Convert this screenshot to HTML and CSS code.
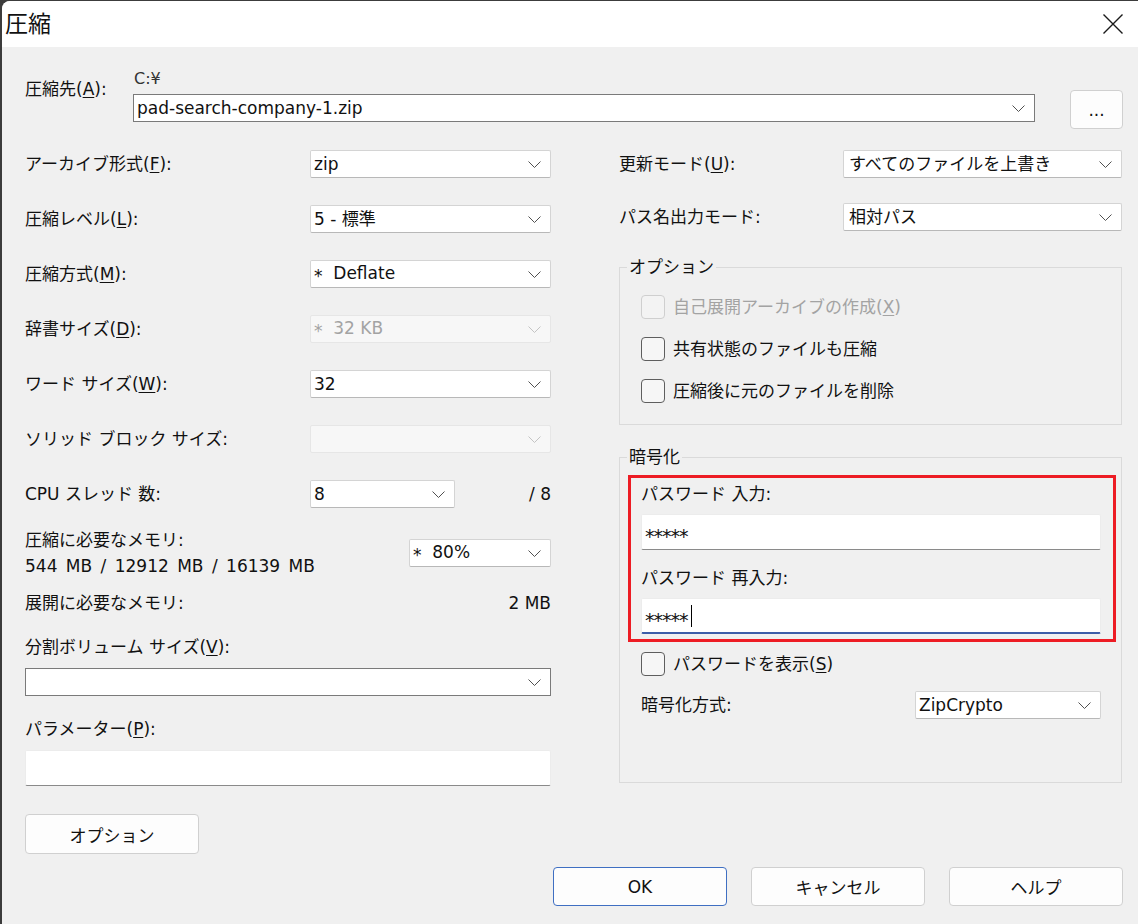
FILE: index.html
```html
<!DOCTYPE html>
<html lang="ja">
<head>
  <meta charset="UTF-8">
  <title>圧縮</title>
  <link rel="stylesheet" href="styles.css">
</head>
<body>

<div class="window">
  <!-- Title bar -->
  <div class="titlebar">
    <span class="title">圧縮</span>
    <svg class="close" width="20" height="20" viewBox="0 0 20 20">
      <path d="M0.5 0.5 L19.5 19.5 M19.5 0.5 L0.5 19.5" stroke="#1a1a1a" stroke-width="1.4" fill="none"/>
    </svg>
  </div>

  <div class="content">
    <!-- Destination archive -->
    <div class="dest">
      <span class="dest-label">圧縮先(<u>A</u>):</span>
      <div class="dest-field">
        <div class="dest-dir">C:¥</div>
        <div class="combo combo-edit combo-dest">
          <span>pad-search-company-1.zip</span>
          <svg class="chev" width="13" height="7" viewBox="0 0 13 7"><path d="M0.5 0.5 L6.5 6.5 L12.5 0.5" stroke="#505050" fill="none"/></svg>
        </div>
      </div>
      <button class="btn btn-browse">...</button>
    </div>

    <div class="columns">
      <!-- Left column: format settings -->
      <div class="col-left">
        <div class="row">
          <span class="lbl">アーカイブ形式(<u>F</u>):</span>
          <div class="combo combo-left"><span>zip</span><svg class="chev" width="13" height="7" viewBox="0 0 13 7"><path d="M0.5 0.5 L6.5 6.5 L12.5 0.5" stroke="#505050" fill="none"/></svg></div>
        </div>
        <div class="row">
          <span class="lbl">圧縮レベル(<u>L</u>):</span>
          <div class="combo combo-left"><span>5 - 標準</span><svg class="chev" width="13" height="7" viewBox="0 0 13 7"><path d="M0.5 0.5 L6.5 6.5 L12.5 0.5" stroke="#505050" fill="none"/></svg></div>
        </div>
        <div class="row">
          <span class="lbl">圧縮方式(<u>M</u>):</span>
          <div class="combo combo-left"><span><span class="star">*</span>  Deflate</span><svg class="chev" width="13" height="7" viewBox="0 0 13 7"><path d="M0.5 0.5 L6.5 6.5 L12.5 0.5" stroke="#505050" fill="none"/></svg></div>
        </div>
        <div class="row">
          <span class="lbl">辞書サイズ(<u>D</u>):</span>
          <div class="combo combo-left disabled"><span><span class="star">*</span>  32 KB</span><svg class="chev" width="13" height="7" viewBox="0 0 13 7"><path d="M0.5 0.5 L6.5 6.5 L12.5 0.5" stroke="#c4c4c4" fill="none"/></svg></div>
        </div>
        <div class="row">
          <span class="lbl">ワード サイズ(<u>W</u>):</span>
          <div class="combo combo-left"><span>32</span><svg class="chev" width="13" height="7" viewBox="0 0 13 7"><path d="M0.5 0.5 L6.5 6.5 L12.5 0.5" stroke="#505050" fill="none"/></svg></div>
        </div>
        <div class="row">
          <span class="lbl">ソリッド ブロック サイズ:</span>
          <div class="combo combo-left disabled"><span></span><svg class="chev" width="13" height="7" viewBox="0 0 13 7"><path d="M0.5 0.5 L6.5 6.5 L12.5 0.5" stroke="#c4c4c4" fill="none"/></svg></div>
        </div>
        <div class="row row-cpu">
          <span class="lbl">CPU スレッド 数:</span>
          <div class="combo combo-cpu"><span>8</span><svg class="chev" width="13" height="7" viewBox="0 0 13 7"><path d="M0.5 0.5 L6.5 6.5 L12.5 0.5" stroke="#505050" fill="none"/></svg></div>
          <span class="cpu-total">/ 8</span>
        </div>

        <div class="mem">
          <div class="mem-text">
            <div>圧縮に必要なメモリ:</div>
            <div class="mem-values">544 MB / 12912 MB / 16139 MB</div>
          </div>
          <div class="combo combo-mem"><span><span class="star">*</span>  80%</span><svg class="chev" width="13" height="7" viewBox="0 0 13 7"><path d="M0.5 0.5 L6.5 6.5 L12.5 0.5" stroke="#505050" fill="none"/></svg></div>
        </div>
        <div class="unpack">
          <span>展開に必要なメモリ:</span>
          <span>2 MB</span>
        </div>

        <div class="line-label split-label">分割ボリューム サイズ(<u>V</u>):</div>
        <div class="combo combo-edit combo-wide"><span></span><svg class="chev" width="13" height="7" viewBox="0 0 13 7"><path d="M0.5 0.5 L6.5 6.5 L12.5 0.5" stroke="#505050" fill="none"/></svg></div>

        <div class="line-label param-label">パラメーター(<u>P</u>):</div>
        <div class="textbox"></div>

        <button class="btn btn-options">オプション</button>
      </div>

      <!-- Right column: update mode, options, encryption -->
      <div class="col-right">
        <div class="row row-right">
          <span class="lbl lbl-right">更新モード(<u>U</u>):</span>
          <div class="combo combo-right"><span>すべてのファイルを上書き</span><svg class="chev" width="13" height="7" viewBox="0 0 13 7"><path d="M0.5 0.5 L6.5 6.5 L12.5 0.5" stroke="#505050" fill="none"/></svg></div>
        </div>
        <div class="row row-right">
          <span class="lbl lbl-right">パス名出力モード:</span>
          <div class="combo combo-right"><span>相対パス</span><svg class="chev" width="13" height="7" viewBox="0 0 13 7"><path d="M0.5 0.5 L6.5 6.5 L12.5 0.5" stroke="#505050" fill="none"/></svg></div>
        </div>

        <fieldset class="group group-options">
          <legend>オプション</legend>
          <label class="check-row disabled"><span class="check"></span>自己展開アーカイブの作成(<u>X</u>)</label>
          <label class="check-row"><span class="check"></span>共有状態のファイルも圧縮</label>
          <label class="check-row"><span class="check"></span>圧縮後に元のファイルを削除</label>
        </fieldset>

        <fieldset class="group group-crypt">
          <legend>暗号化</legend>
          <div class="highlight">
            <div class="pw-label">パスワード 入力:</div>
            <div class="textbox pw-box"><span class="pw-stars">*****</span></div>
            <div class="pw-label pw-label-2">パスワード 再入力:</div>
            <div class="textbox pw-box focused"><span class="pw-stars">*****</span><span class="caret"></span></div>
          </div>
          <label class="check-row show-pw"><span class="check"></span>パスワードを表示(<u>S</u>)</label>
          <div class="crypt-method">
            <span>暗号化方式:</span>
            <div class="combo combo-crypt"><span>ZipCrypto</span><svg class="chev" width="13" height="7" viewBox="0 0 13 7"><path d="M0.5 0.5 L6.5 6.5 L12.5 0.5" stroke="#505050" fill="none"/></svg></div>
          </div>
        </fieldset>
      </div>
    </div>

    <!-- Dialog buttons -->
    <div class="footer">
      <button class="btn btn-ok">OK</button>
      <button class="btn">キャンセル</button>
      <button class="btn">ヘルプ</button>
    </div>
  </div>
</div>

</body>
</html>
```

FILE: styles.css
```css
/* Page and window frame */
html, body {
  margin: 0;
  padding: 0;
  height: 100%;
  overflow: hidden;
}

body {
  background-color: #3c3c3c;
  font-family: "DejaVu Sans", "Noto Sans CJK JP", sans-serif;
  font-size: 17px;
  line-height: 20px;
  color: #111;
}

.window {
  margin: 1px 0 0 2px;
  height: 923px;
  background-color: #f0f0f0;
  border-top-left-radius: 8px;
  overflow: hidden;
}

/* Title bar */
.titlebar {
  height: 46px;
  background-color: #fff;
  display: flex;
  align-items: center;
  justify-content: space-between;
  padding: 0 15px 0 3px;
}

.title {
  font-size: 23px;
  line-height: 28px;
}

.close {
  display: block;
}

.content {
  padding: 0 15px 0 23px;
}

u {
  text-underline-offset: 2px;
}

/* Asterisk sits on the middle of the line, like the system font */
.star {
  font-size: 17px;
  vertical-align: -3px;
}

/* Destination row */
.dest {
  display: flex;
  padding-top: 22px;
  height: 60px;
}

.dest-label {
  width: 108px;
  margin-top: 10px;
}

.dest-field {
  width: 902px;
}

.dest-dir {
  font-size: 16px;
  line-height: 20px;
  padding-left: 1px;
  color: #333;
}

.combo-dest {
  margin-top: 5px;
  width: 902px;
}

.btn-browse {
  margin-left: 35px;
  margin-top: 21px;
  width: 53px;
  height: 39px;
  font-size: 12px;
  color: #555;
  padding: 0;
}

/* Combo boxes */
.combo {
  box-sizing: border-box;
  height: 28px;
  background-color: #fff;
  border: 1px solid #d4d4d4;
  border-bottom-color: #b8b8b8;
  border-radius: 2px;
  display: flex;
  align-items: center;
  justify-content: space-between;
  padding: 0 9px 0 3px;
  flex-shrink: 0;
}

.combo > span {
  white-space: pre;
}

.combo-edit {
  border: 1px solid #7a7a7a;
  border-radius: 0;
}

.combo.disabled {
  background-color: #f7f7f7;
  border-color: #e6e6e6;
  color: #a3a3a3;
}

.chev {
  display: block;
  flex-shrink: 0;
}

.combo-left { width: 241px; }
.combo-cpu { width: 145px; }
.combo-mem { width: 142px; }
.combo-wide { width: 526px; margin-top: 8px; }
.combo-right { width: 279px; padding-left: 5px; }
.combo-crypt { width: 186px; }

/* Two column body */
.columns {
  display: flex;
  margin-top: 21px;
  height: 705px;
}

.col-left {
  width: 526px;
}

.col-right {
  width: 503px;
  margin-left: 68px;
}

.row {
  display: flex;
  align-items: center;
  height: 28px;
  margin-bottom: 27px;
}

.lbl {
  width: 285px;
  flex-shrink: 0;
}

.row-cpu {
  margin-bottom: 19px;
}

.cpu-total {
  margin-left: auto;
}

/* Memory usage lines */
.mem {
  display: flex;
  align-items: center;
  justify-content: space-between;
}

.mem-text div {
  line-height: 26px;
}

.mem-values {
  word-spacing: 3px;
}

.unpack {
  display: flex;
  justify-content: space-between;
  line-height: 26px;
  margin-top: 11px;
}

.line-label {
  line-height: 26px;
}

.split-label { margin-top: 18px; }
.param-label { margin-top: 20px; }

/* Plain text inputs */
.textbox {
  box-sizing: border-box;
  height: 36px;
  margin-top: 8px;
  background-color: #fff;
  border: 1px solid #ececec;
  border-bottom: 1px solid #8a8a8a;
  border-radius: 2px;
}

/* Buttons */
.btn {
  box-sizing: border-box;
  font-family: inherit;
  font-size: 17px;
  background-color: #fdfdfd;
  border: 1px solid #d0d0d0;
  border-radius: 4px;
  color: #111;
}

.btn-options {
  display: block;
  margin-top: 28px;
  width: 174px;
  height: 40px;
}

/* Right column */
.row-right {
  margin-bottom: 25px;
}

.lbl-right {
  width: 224px;
}

.row-right + .row-right {
  margin-bottom: 26px;
}

.group {
  margin: 0;
  padding: 0 0 0 21px;
  border: 1px solid #dadada;
  box-sizing: border-box;
}

.group legend {
  padding: 0 2px;
  margin-left: -14px;
  line-height: 20px;
}

.group-options {
  height: 168px;
  padding-top: 9px;
}

.check-row {
  display: flex;
  align-items: center;
  height: 42px;
}

.check-row.disabled {
  color: #a3a3a3;
}

.check {
  box-sizing: border-box;
  width: 24px;
  height: 24px;
  border: 1px solid #5e5e5e;
  border-radius: 4px;
  background-color: #f6f6f6;
  margin-right: 8px;
  flex-shrink: 0;
}

.check-row.disabled .check {
  border-color: #cfcfcf;
  background-color: #f3f3f3;
}

.group-crypt {
  margin-top: 22px;
  height: 336px;
}

/* Red frame around the password fields */
.highlight {
  margin: 8px 5px 0 -13px;
  border: 3px solid #ed1c24;
  padding: 6px 12px 5px 10px;
}

.pw-label {
  line-height: 20px;
}

.pw-label-2 {
  margin-top: 18px;
}

.pw-box {
  margin-top: 10px;
  display: flex;
  align-items: center;
  padding-left: 3px;
}

.pw-stars {
  font-size: 19px;
  letter-spacing: -1px;
  padding-top: 8px;
}

.pw-box.focused {
  border-bottom: 2px solid #3d5ea8;
}

.caret {
  display: inline-block;
  width: 1px;
  height: 22px;
  background-color: #000;
  margin-left: 3px;
}

.show-pw {
  margin-top: 10px;
  height: 24px;
}

.crypt-method {
  display: flex;
  align-items: center;
  justify-content: space-between;
  margin-top: 15px;
  margin-right: 20px;
}

/* Footer buttons */
.footer {
  display: flex;
  justify-content: flex-end;
  gap: 24px;
  margin-top: 12px;
}

.footer .btn {
  width: 174px;
  height: 39px;
}

.btn-ok {
  border-color: #3f6fc2;
}
```
